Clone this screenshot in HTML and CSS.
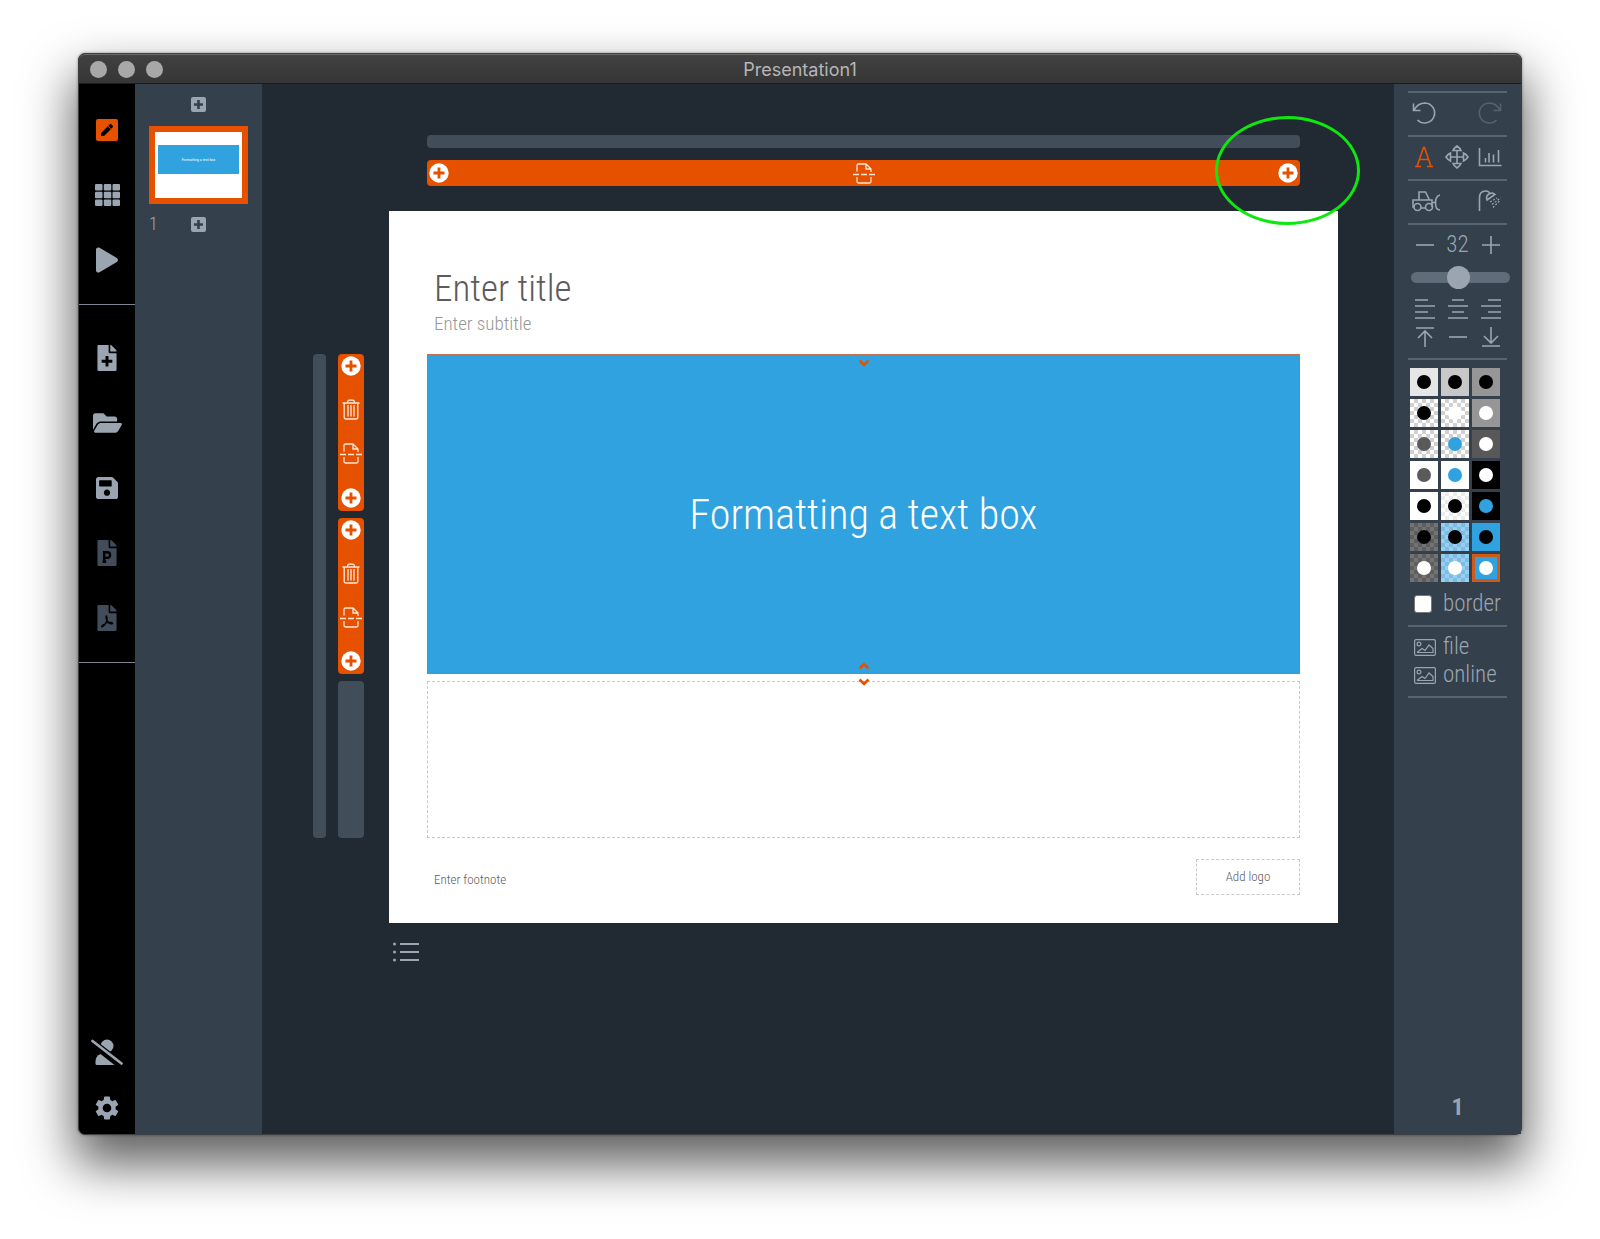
FILE: index.html
```html
<!DOCTYPE html>
<html lang="en">
<head>
<meta charset="utf-8">
<meta name="viewport" content="width=device-width, initial-scale=1">
<title>Presentation1</title>
<link rel="stylesheet" href="styles.css">
</head>
<body>
<svg class="sprite" aria-hidden="true">
  <symbol id="file" viewBox="0 0 384 512"><path fill="currentColor" d="M224 136V0H24C10.700 0 0 10.700 0 24v464c0 13.300 10.700 24 24 24h336c13.300 0 24-10.700 24-24V160H248c-13.200 0-24-10.800-24-24zm160-14.100v6.100H256V0h6.100c6.400 0 12.500 2.500 17 7l97.900 98c4.500 4.500 7 10.600 7 16.900z"/></symbol>
  <symbol id="plus-square" viewBox="0 0 15 15"><rect width="15" height="15" rx="2" fill="currentColor"/><path d="M7.500 3v9M3 7.500h9" stroke="#34404c" stroke-width="2.600"/></symbol>
  <symbol id="plus-circle" viewBox="0 0 20 20"><circle cx="10" cy="10" r="9.700" fill="#fff"/><path d="M10 4.500v11M4.500 10h11" stroke="#e65100" stroke-width="2.800"/></symbol>
  <symbol id="trash" viewBox="0 0 18 21"><path fill="none" stroke="#ffe6d8" stroke-width="1.300" d="M.5 4h17M5.500 4c0-3 1-3 3.500-3s3.500 0 3.500 3M2.200 4v14.500q0 1.500 1.500 1.500h10.600q1.500 0 1.500-1.500V4M6 6v11.500M9 6v11.500M12 6v11.500"/></symbol>
  <symbol id="split" viewBox="0 0 22 21"><path fill="none" stroke="#ffe6d8" stroke-width="1.300" d="M4 8.500V2.500q0-1.500 1.500-1.500h7.500l5 5v3M13 1v5h5M4 14v4.500q0 1.500 1.500 1.500h11q1.500 0 1.500-1.500V14M0 11.500h6M8 11.500h6M16 11.500h6"/></symbol>
  <symbol id="image" viewBox="0 0 22 17"><g fill="none" stroke="currentColor" stroke-width="1.200"><rect x=".6" y=".6" width="20.800" height="15.800" rx="1.500"/><circle cx="5" cy="5" r="1.900"/><path d="M3 13.500l5-4 3 2 4-5.500 4 3.500v4H3"/></g></symbol>
</svg>

<div class="window">
  <header class="titlebar">
    <div class="lights"><span></span><span></span><span></span></div>
    <div class="window-title">Presentation1</div>
  </header>

  <div class="workspace">
    <nav class="sidebar" aria-label="Main">
      <div class="group group-views">
        <button aria-label="Edit"><svg width="22" height="22" viewBox="0 0 22 22"><rect width="22" height="22" rx="2" fill="#e65100"/><path transform="translate(5 5) scale(.0235)" d="M290.740 93.240l128.020 128.020-277.990 277.990-114.140 12.600C11.350 513.540-1.560 500.620.14 485.340l12.700-114.220 277.900-277.880zm207.200-19.060l-60.110-60.110c-18.750-18.750-49.160-18.750-67.910 0l-56.550 56.550 128.020 128.020 56.550-56.550c18.750-18.760 18.750-49.160 0-67.910z"/></svg></button>
        <button aria-label="Overview"><svg width="25" height="22" viewBox="0 0 25 22" fill="currentColor"><rect width="7.500" height="6.500" rx="1"/><rect x="8.800" width="7.500" height="6.500" rx="1"/><rect x="17.500" width="7.500" height="6.500" rx="1"/><rect y="7.800" width="7.500" height="6.500" rx="1"/><rect x="8.800" y="7.800" width="7.500" height="6.500" rx="1"/><rect x="17.500" y="7.800" width="7.500" height="6.500" rx="1"/><rect y="15.500" width="7.500" height="6.500" rx="1"/><rect x="8.800" y="15.500" width="7.500" height="6.500" rx="1"/><rect x="17.500" y="15.500" width="7.500" height="6.500" rx="1"/></svg></button>
        <button aria-label="Play"><svg width="22" height="26" viewBox="0 0 448 512"><path fill="currentColor" d="M424.400 214.700L72.400 6.600C43.800-10.300 0 6.100 0 47.900V464c0 37.500 40.700 60.100 72.400 41.300l352-208c31.400-18.500 31.500-64.100 0-82.600z"/></svg></button>
      </div>
      <div class="group group-files">
        <button aria-label="New"><svg width="20" height="26" viewBox="0 0 384 512"><use href="#file"/><path stroke="#000" stroke-width="58" d="M192 215v210M87 320h210"/></svg></button>
        <button aria-label="Open"><svg width="29" height="26" viewBox="0 0 576 512"><path fill="currentColor" d="M572.694 292.093L500.270 416.248A63.997 63.997 0 0 1 444.989 448H45.025c-18.523 0-30.064-20.093-20.731-36.093l72.424-124.155A64 64 0 0 1 152 256h399.964c18.523 0 30.064 20.093 20.730 36.093zM152 224h328v-48c0-26.510-21.490-48-48-48H272l-64-64H48C21.490 64 0 85.490 0 112v278.046l69.077-118.418C86.214 242.250 117.989 224 152 224z"/></svg></button>
        <button aria-label="Save"><svg width="22" height="26" viewBox="0 0 448 512"><path fill="currentColor" d="M433.941 129.941l-83.882-83.882A48 48 0 0 0 316.118 32H48C21.490 32 0 53.490 0 80v352c0 26.510 21.490 48 48 48h352c26.510 0 48-21.490 48-48V163.882a48 48 0 0 0-14.059-33.941zM224 416c-35.346 0-64-28.654-64-64 0-35.346 28.654-64 64-64s64 28.654 64 64c0 35.346-28.654 64-64 64zm96-304.520V212c0 6.627-5.373 12-12 12H76c-6.627 0-12-5.373-12-12V108c0-6.627 5.373-12 12-12h228.520c3.183 0 6.235 1.264 8.485 3.515l3.480 3.480A11.996 11.996 0 0 1 320 111.480z"/></svg></button>
        <button class="dim" aria-label="Export to PowerPoint"><svg width="20" height="26" viewBox="0 0 384 512"><use href="#file"/><path fill="none" stroke="#000" stroke-width="48" d="M136 440V240h60c75 0 75 112 0 112h-60M106 430h70"/></svg></button>
        <button class="dim" aria-label="Export to PDF"><svg width="20" height="26" viewBox="0 0 384 512"><use href="#file"/><path fill="none" stroke="#000" stroke-width="24" d="M180 215c-22 30 10 90 40 125s60 40 85 25c5-35-90-25-125-10s-100 45-95 70 60-20 85-75 35-100 10-135z"/></svg></button>
      </div>
      <div class="group group-account">
        <button aria-label="Signed out"><svg width="32" height="26" viewBox="0 0 32 26"><circle cx="16" cy="7" r="6.500" fill="currentColor"/><path fill="currentColor" d="M6 26q-1.500 0-1.500-1.500v-2q0-5.500 5-7.500L23.500 26z"/><path d="M1.500 2l29 22.500" stroke="#000" stroke-width="5"/><path d="M1.500 2l29 22.500" stroke="currentColor" stroke-width="2.800" stroke-linecap="round"/></svg></button>
        <button aria-label="Settings"><svg width="24" height="24" viewBox="2 2 20 20"><path fill="currentColor" d="M19.140 12.940c.04-.3.06-.61.06-.94 0-.32-.02-.64-.07-.94l2.030-1.580a.49.49 0 0 0 .12-.61l-1.920-3.320a.488.488 0 0 0-.59-.22l-2.390.96c-.5-.38-1.030-.7-1.620-.94l-.36-2.540a.484.484 0 0 0-.48-.41h-3.840c-.24 0-.43.17-.47.41l-.36 2.540c-.59.24-1.130.57-1.620.94l-2.390-.96c-.22-.08-.47 0-.59.22L2.740 8.870c-.12.21-.08.47.12.61l2.030 1.580c-.05.3-.09.63-.09.94s.02.64.07.94l-2.030 1.580a.49.49 0 0 0-.12.61l1.920 3.320c.12.22.37.29.59.22l2.390-.96c.5.38 1.030.7 1.620.94l.36 2.540c.05.24.24.41.48.41h3.840c.24 0 .44-.17.47-.41l.36-2.540c.59-.24 1.130-.56 1.620-.94l2.390.96c.22.08.47 0 .59-.22l1.920-3.320c.12-.22.07-.47-.12-.61l-2.010-1.580zM12 15.600c-1.980 0-3.600-1.620-3.600-3.600s1.620-3.600 3.600-3.600 3.600 1.620 3.600 3.600-1.620 3.600-3.600 3.600z"/></svg></button>
      </div>
    </nav>

    <aside class="slides" aria-label="Slides">
      <button class="add" aria-label="Add slide before"><svg width="15" height="15"><use href="#plus-square"/></svg></button>
      <button class="thumb" aria-label="Slide 1"><span class="thumb-box">Formatting a text box</span></button>
      <div class="slide-row"><span>1</span><button class="add" aria-label="Add slide after"><svg width="15" height="15"><use href="#plus-square"/></svg></button></div>
    </aside>

    <main class="canvas">
      <div class="column-bars">
        <div class="bar"></div>
        <div class="bar bar-active">
          <button aria-label="Add column left"><svg width="20" height="20"><use href="#plus-circle"/></svg></button>
          <button aria-label="Split column"><svg width="22" height="21"><use href="#split"/></svg></button>
          <button aria-label="Add column right"><svg width="20" height="20"><use href="#plus-circle"/></svg></button>
          <span class="highlight"></span>
        </div>
      </div>
      <div class="stage">
        <div class="row-bars">
          <div class="rail"></div>
          <div class="rail-cells">
            <div class="cell cell-active">
              <button aria-label="Add row above"><svg width="20" height="20"><use href="#plus-circle"/></svg></button>
              <button aria-label="Delete row"><svg width="18" height="21"><use href="#trash"/></svg></button>
              <button aria-label="Split row"><svg width="22" height="21"><use href="#split"/></svg></button>
              <button aria-label="Add row below"><svg width="20" height="20"><use href="#plus-circle"/></svg></button>
            </div>
            <div class="cell cell-active">
              <button aria-label="Add row above"><svg width="20" height="20"><use href="#plus-circle"/></svg></button>
              <button aria-label="Delete row"><svg width="18" height="21"><use href="#trash"/></svg></button>
              <button aria-label="Split row"><svg width="22" height="21"><use href="#split"/></svg></button>
              <button aria-label="Add row below"><svg width="20" height="20"><use href="#plus-circle"/></svg></button>
            </div>
            <div class="cell"></div>
          </div>
        </div>
        <section class="slide">
          <div class="slide-head">
            <input class="title" aria-label="Title" value="Enter title">
            <input class="subtitle" aria-label="Subtitle" value="Enter subtitle">
          </div>
          <div class="boxes">
            <div class="box box-filled">
              <svg class="chevron chevron-top" width="12" height="8" viewBox="0 0 12 8"><path d="M1.500 1.500L6 6l4.500-4.500"/></svg>
              Formatting a text box
              <svg class="chevron chevron-bottom" width="12" height="8" viewBox="0 0 12 8"><path d="M1.500 6.500L6 2l4.500 4.500"/></svg>
            </div>
            <div class="box box-empty">
              <svg class="chevron chevron-edge" width="12" height="8" viewBox="0 0 12 8"><path d="M1.500 1.500L6 6l4.500-4.500"/></svg>
            </div>
          </div>
          <footer class="slide-foot">
            <input class="footnote" aria-label="Footnote" value="Enter footnote">
            <button class="logo">Add logo</button>
          </footer>
        </section>
      </div>
      <button class="list" aria-label="List"><svg width="26" height="20" viewBox="0 0 26 20"><g fill="currentColor"><circle cx="1.500" cy="2" r="1.500"/><circle cx="1.500" cy="10" r="1.500"/><circle cx="1.500" cy="18" r="1.500"/></g><path d="M7 2h19M7 10h19M7 18h19" stroke="currentColor" stroke-width="2"/></svg></button>
    </main>

    <aside class="format" aria-label="Format">
      <div class="tools tools-2">
        <button aria-label="Undo"><svg width="24" height="24" viewBox="0 0 24 24"><path d="M1.500 2.500v7h7M2 9C5 3.500 9 2 13 2a10 10 0 1 1-7.500 17"/></svg></button>
        <button class="faded" aria-label="Redo"><svg width="24" height="24" viewBox="0 0 24 24"><path d="M22.500 2.500v7h-7M22 9C19 3.500 15 2 11 2a10 10 0 1 0 7.500 17"/></svg></button>
      </div>
      <div class="tools tools-3">
        <button class="active" aria-label="Text"><svg width="24" height="24" viewBox="0 0 24 24"><path d="M3 21.500h6M15 21.500h6M5 21.500L11.500 2.500h1L19 21.500M7.500 14.500h9"/></svg></button>
        <button aria-label="Move"><svg width="24" height="24" viewBox="0 0 24 24"><path d="M12 6v12M6 12h12M12 1q3 2 4 4.500H8Q9 3 12 1zM12 23q3-2 4-4.500H8Q9 21 12 23zM1 12q2-3 4.500-4v8Q3 15 1 12zM23 12q-2-3-4.500-4v8q2.500-1 4.500-4z"/></svg></button>
        <button aria-label="Chart"><svg width="24" height="24" viewBox="0 0 24 24"><path d="M1.500 3v17.500H23.500M7.500 13v4.500M11 8v9.500M15.500 9.500v8M20.500 5v12.500"/></svg></button>
      </div>
      <div class="tools tools-2">
        <button aria-label="Clear all"><svg width="28" height="24" viewBox="0 0 28 24"><path d="M2.500 18H1v-7h6V3h6.500l4 8H20v7M7 11h10M9 19h5M20 13.500h3.500M28 6q-4.500 1-4.500 8t4.500 7"/><circle cx="5.500" cy="18" r="3.500"/><circle cx="17" cy="18" r="3.500"/></svg></button>
        <button aria-label="Format painter"><svg width="24" height="24" viewBox="0 0 24 24"><path d="M1.500 22V9q0-7 6-7 4 0 4 3M9 11l8-5.500Q14.500 3 11 5t-2 6z"/><path stroke-width="1.200" stroke-dasharray="2 1.500" d="M12 13l7-4M14 15.500l8.500-6.500M15 18.500l7-7"/></svg></button>
      </div>
      <div class="text-tools">
        <div class="size">
          <button aria-label="Smaller"><svg width="18" height="18" viewBox="0 0 18 18"><path d="M0 9h18"/></svg></button>
          <output>32</output>
          <button aria-label="Larger"><svg width="18" height="18" viewBox="0 0 18 18"><path d="M0 9h18M9 0v18"/></svg></button>
        </div>
        <input class="slider" type="range" min="0" max="100" value="47" aria-label="Text size">
        <div class="align">
          <button aria-label="Align left"><svg width="20" height="20" viewBox="0 0 20 20"><path d="M0 1h13M0 7h20M0 13h13M0 19h20"/></svg></button>
          <button aria-label="Align center"><svg width="20" height="20" viewBox="0 0 20 20"><path d="M4 1h12M0 7h20M4 13h12M0 19h20"/></svg></button>
          <button aria-label="Align right"><svg width="20" height="20" viewBox="0 0 20 20"><path d="M7 1h13M0 7h20M7 13h13M0 19h20"/></svg></button>
          <button aria-label="Align top"><svg width="18" height="20" viewBox="0 0 18 20"><path d="M0 1h18M9 20V4M2 11l7-7 7 7"/></svg></button>
          <button aria-label="Align middle"><svg width="18" height="20" viewBox="0 0 18 20"><path d="M0 10h18"/></svg></button>
          <button aria-label="Align bottom"><svg width="18" height="20" viewBox="0 0 18 20"><path d="M0 19h18M9 0v16M2 9l7 7 7-7"/></svg></button>
        </div>
      </div>
      <div class="color-tools">
        <div class="swatches">
          <button class="bg-e6 dot-black" aria-label="Style 1"></button><button class="bg-c8 dot-black" aria-label="Style 2"></button><button class="bg-96 dot-black" aria-label="Style 3"></button>
          <button class="bg-check dot-black" aria-label="Style 4"></button><button class="bg-check dot-white" aria-label="Style 5"></button><button class="bg-96 dot-white" aria-label="Style 6"></button>
          <button class="bg-check dot-gray" aria-label="Style 7"></button><button class="bg-check dot-blue" aria-label="Style 8"></button><button class="bg-58 dot-white" aria-label="Style 9"></button>
          <button class="bg-white dot-gray" aria-label="Style 10"></button><button class="bg-white dot-blue" aria-label="Style 11"></button><button class="bg-black dot-white" aria-label="Style 12"></button>
          <button class="bg-white dot-black" aria-label="Style 13"></button><button class="bg-check-light dot-black" aria-label="Style 14"></button><button class="bg-black dot-blue" aria-label="Style 15"></button>
          <button class="bg-check-dark dot-black" aria-label="Style 16"></button><button class="bg-check-blue dot-black" aria-label="Style 17"></button><button class="bg-blue dot-black" aria-label="Style 18"></button>
          <button class="bg-check-dark dot-white" aria-label="Style 19"></button><button class="bg-check-blue dot-white" aria-label="Style 20"></button><button class="bg-blue dot-white selected" aria-label="Style 21"></button>
        </div>
        <label class="option"><input type="checkbox"><span>border</span></label>
      </div>
      <div class="image-tools">
        <button class="option"><svg width="22" height="17"><use href="#image"/></svg><span>file</span></button>
        <button class="option"><svg width="22" height="17"><use href="#image"/></svg><span>online</span></button>
      </div>
      <div class="page">1</div>
    </aside>
  </div>
</div>
</body>
</html>
```
FILE: styles.css
```css
* { box-sizing: border-box; }

body {
  margin: 0;
  min-height: 100vh;
  display: flex;
  padding: 53px 78px 104px;
  background: #fff;
  font-family: "Roboto Condensed", "Liberation Sans Narrow", Roboto, sans-serif;
  font-weight: 300;
  color: #9ba5b1;
}

button, input {
  margin: 0;
  padding: 0;
  border: 0;
  background: none;
  color: inherit;
  font: inherit;
}

button {
  display: flex;
  align-items: center;
  justify-content: center;
}

svg { display: block; flex: none; overflow: visible; }
.sprite { position: absolute; width: 0; height: 0; }

.window {
  flex: 1;
  display: flex;
  flex-direction: column;
  border: 1px solid #3c4043;
  border-radius: 7px;
  background: #212933;
  box-shadow: 0 0 3px rgba(0, 0, 0, .4), 0 26px 50px 4px rgba(0, 0, 0, .62);
}

.titlebar {
  display: grid;
  grid-template-columns: 1fr auto 1fr;
  align-items: center;
  height: 30px;
  padding: 1px 11px 0;
  border-top: 1px solid #696969;
  border-bottom: 1px solid #1b1b1b;
  border-radius: 6px 6px 0 0;
  background: linear-gradient(#414141, #363636);
}
.lights { display: flex; gap: 11px; }
.lights span { width: 17px; height: 17px; border-radius: 50%; background: #a8a8a8; }
.window-title { font: 400 18px/26px Inter, sans-serif; color: #b6b6b6; }

.workspace { flex: 1; display: flex; }

.sidebar {
  width: 56px;
  display: flex;
  flex-direction: column;
  background: #000;
  border-bottom-left-radius: 6px;
}
.group { display: flex; flex-direction: column; }
.group button { height: 65px; }
.group-views { padding: 13px 0 12px; border-bottom: 1px solid #7d8794; }
.group-files { padding: 20px 0 12px; border-bottom: 1px solid #7d8794; }
.group-account { margin-top: auto; gap: 4px; }
.group-account button { height: 52px; }
.dim { color: #414d5a; }

.slides {
  width: 127px;
  padding: 13px 14px;
  background: #34404c;
}
.add { width: 100%; height: 15px; }
.thumb {
  width: 99px;
  height: 78px;
  margin: 14px 0 12px;
  padding: 13px 3px 24px;
  border: 6px solid #e65100;
  background: #fff;
}
.thumb-box {
  display: flex;
  align-items: center;
  justify-content: center;
  width: 100%;
  height: 29px;
  background: #2fa2df;
  color: #fff;
  font-size: 4px;
  font-weight: 400;
}
.slide-row {
  display: grid;
  grid-template-columns: 20px 1fr 20px;
  align-items: center;
  font-size: 18px;
  line-height: 16px;
}

.canvas { flex: 1; padding: 51px 56px 0 51px; }
.column-bars {
  display: flex;
  flex-direction: column;
  gap: 12px;
  margin: 0 38px 25px 114px;
}
.bar { height: 13px; border-radius: 4px; background: #414d59; }
.bar-active {
  position: relative;
  display: flex;
  align-items: center;
  justify-content: space-between;
  height: 26px;
  padding: 0 2px;
  background: #e65100;
}
.highlight {
  position: absolute;
  top: -44px;
  right: -60px;
  width: 145px;
  height: 109px;
  border: 3px solid #0ee80e;
  border-radius: 50%;
}

.stage { display: flex; gap: 25px; }
.row-bars { display: flex; gap: 12px; padding: 143px 0 85px; }
.rail { width: 13px; border-radius: 4px; background: #414d59; }
.rail-cells { width: 26px; display: flex; flex-direction: column; gap: 7px; }
.cell {
  flex: 1;
  display: flex;
  flex-direction: column;
  align-items: center;
  justify-content: space-between;
  padding: 2px 0 3px;
  border-radius: 4px;
  background: #414d59;
}
.cell-active { background: #e65100; }

.slide {
  flex: 1;
  display: flex;
  flex-direction: column;
  aspect-ratio: 4 / 3;
  padding: 0 38px;
  background: #fff;
  color: #5c5c5c;
}
.slide-head {
  height: 143px;
  display: flex;
  flex-direction: column;
  padding: 54px 7px 0;
}
.title { height: 46px; font-size: 37px; }
.subtitle { height: 24px; font-size: 19px; color: #979797; }
.boxes {
  flex: 1;
  display: grid;
  grid-template-rows: repeat(3, 1fr);
  gap: 7px;
}
.box { position: relative; display: flex; align-items: center; justify-content: center; }
.box-filled {
  grid-row: span 2;
  border: 1px solid #c27050;
  background: #2fa2df;
  color: #fff;
  font-size: 42px;
}
.box-empty { border: 1px dashed #c8c8c8; }
.chevron {
  position: absolute;
  left: calc(50% - 6px);
  fill: none;
  stroke: #e65100;
  stroke-width: 2.6;
}
.chevron-top { top: 4px; }
.chevron-bottom { bottom: 3px; }
.chevron-edge { top: -4px; }
.slide-foot {
  height: 85px;
  display: flex;
  align-items: flex-start;
  justify-content: space-between;
  padding: 21px 0 0 7px;
  font-size: 13px;
}
.footnote { width: 300px; height: 42px; }
.logo { width: 104px; height: 36px; border: 1px dashed #c8c8c8; }
.list { margin: 19px 0 0 80px; }

.format {
  width: 127px;
  display: flex;
  flex-direction: column;
  padding: 7px 14px 13px;
  background: #34404c;
}
.format svg { fill: none; stroke: currentColor; stroke-width: 1.6; }
.tools { display: flex; align-items: center; height: 44px; border-top: 2px solid #576370; padding: 0 5px 2px 4px; justify-content: space-between; }
.active { color: #e65100; }
.faded { color: #56616d; }
.text-tools { border-top: 2px solid #576370; padding: 7px 0 11px; }
.size { display: grid; grid-template-columns: repeat(3, 33px); height: 26px; align-items: center; }
.size output { text-align: center; font-size: 23px; line-height: 26px; }
.slider {
  -webkit-appearance: none;
  appearance: none;
  display: block;
  width: 99px;
  height: 23px;
  margin: 8px 0 10px 3px;
}
.slider::-webkit-slider-runnable-track { height: 11px; border-radius: 6px; background: #5f6c79; }
.slider::-webkit-slider-thumb {
  -webkit-appearance: none;
  width: 23px;
  height: 23px;
  margin-top: -6px;
  border-radius: 50%;
  background: #9ba5b1;
}
.align { display: grid; grid-template-columns: repeat(3, 33px); gap: 8px 0; }
.color-tools { border-top: 2px solid #576370; padding: 8px 0 7px; }
.swatches { display: grid; grid-template-columns: repeat(3, 28px); gap: 3px; padding-left: 2px; margin-bottom: 8px; }
.swatches button { height: 28px; }
.swatches button::before { content: ""; width: 14px; height: 14px; border-radius: 50%; background: currentColor; }
.dot-black { color: #000; }
.dot-white { color: #fff; }
.dot-gray { color: #5a5a5a; }
.dot-blue { color: #2fa2df; }
.bg-e6 { background: #e6e6e6; }
.bg-c8 { background: #c8c8c8; }
.bg-96 { background: #969696; }
.bg-58 { background: #585858; }
.bg-white { background: #fff; }
.bg-black { background: #000; }
.bg-blue { background: #2fa2df; }
.bg-check { background: repeating-conic-gradient(#d2d0d0 0 25%, #fff 0 50%) 0 0 / 8px 8px; }
.bg-check-light { background: repeating-conic-gradient(#ececec 0 25%, #fff 0 50%) 0 0 / 8px 8px; }
.bg-check-dark { background: repeating-conic-gradient(#5e5e5e 0 25%, #737373 0 50%) 0 0 / 8px 8px; }
.bg-check-blue { background: repeating-conic-gradient(#7dbce2 0 25%, #98cff0 0 50%) 0 0 / 8px 8px; }
.swatches .selected { border: 3px solid #cf5a1e; }
.option {
  display: grid;
  grid-template-columns: 22px auto;
  align-items: center;
  justify-content: start;
  column-gap: 7px;
  padding-left: 6px;
  height: 28px;
  font-size: 23px;
  line-height: 28px;
}
.option input {
  appearance: none;
  width: 18px;
  height: 18px;
  border: 1px solid #777;
  border-radius: 3px;
  background: #fff;
}
.image-tools { border-top: 2px solid #576370; border-bottom: 2px solid #576370; padding: 6px 0 7px; }
.page { margin-top: auto; text-align: center; font: 700 24px/28px "Roboto Condensed", Roboto, sans-serif; }
```
